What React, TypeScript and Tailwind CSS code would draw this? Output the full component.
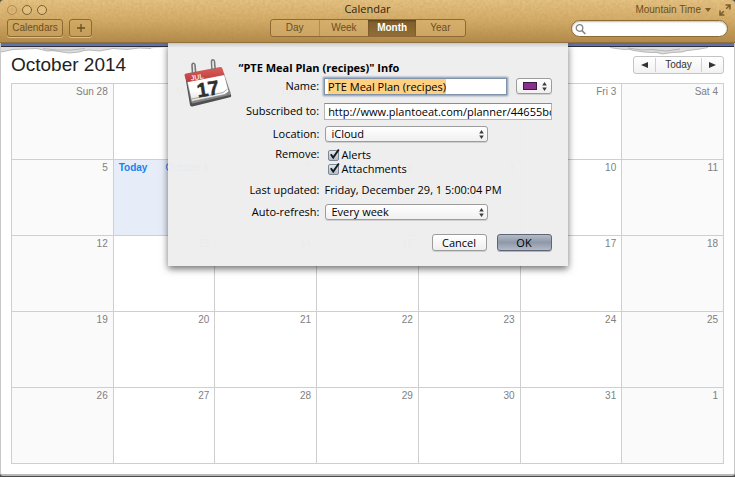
import { useEffect, useRef, type ReactNode } from "react";
import clsx from "clsx";

const weeks = [
  ["Sun 28", "Mon 29", "Tue 30", "Wed October 1", "Thu 2", "Fri 3", "Sat 4"],
  ["5", "October 6", "7", "8", "9", "10", "11"],
  ["12", "13", "14", "15", "16", "17", "18"],
  ["19", "20", "21", "22", "23", "24", "25"],
  ["26", "27", "28", "29", "30", "31", "1"],
];

const views = ["Day", "Week", "Month", "Year"];

const LeatherGrain = () => (
  <svg className="pointer-events-none absolute inset-0 h-full w-full opacity-25" aria-hidden="true">
    <filter id="grain">
      <feTurbulence type="fractalNoise" baseFrequency="0.35" numOctaves="3" seed="4" />
      <feColorMatrix values="0 0 0 0 0.4  0 0 0 0 0.25  0 0 0 0 0.05  1.6 0 0 0 -0.5" />
    </filter>
    <rect width="100%" height="100%" filter="url(#grain)" />
  </svg>
);

const Stepper = () => (
  <svg width="5" height="9" viewBox="0 0 5 9" fill="#3c3c3c" aria-hidden="true">
    <path d="M2.5 0 4.8 3.4H.2zM2.5 9 .2 5.6h4.6z" />
  </svg>
);

const CalendarIcon = () => (
  <svg width="56" height="56" viewBox="0 0 56 56" aria-hidden="true">
    <defs>
      <linearGradient id="red" x1="0" y1="0" x2="0" y2="1">
        <stop offset="0" stopColor="#d8605c" />
        <stop offset="1" stopColor="#bb3a3c" />
      </linearGradient>
      <linearGradient id="paper" x1="0" y1="0" x2="0" y2="1">
        <stop offset="0.6" stopColor="#ffffff" />
        <stop offset="1" stopColor="#dedede" />
      </linearGradient>
    </defs>
    <path d="M5 20 8 26 12 45 50 37.5 51.200 40.500q.3 1.400-1.200 1.800L12.500 51.500q-2 .4-2.500-1.500z" fill="#505050" />
    <path d="M6.500 25 44 18.500 50.500 37.500 50 40 12.500 48.500 11 47z" fill="#858585" />
    <path d="M7.500 26.500 44 19.500 48.500 36.500 45 39.500 12 46.500z" fill="url(#paper)" />
    <path d="M11.500 44 43 37.500q4-3 4.500-3.500M12 46.500 45 39.500l4-3" fill="none" stroke="#888" strokeWidth=".7" />
    <path d="M4.500 20.500q-.3-1.700 1.500-2L40 12q2-.3 2.400 1.500L44.500 20 7 27.200z" fill="url(#red)" />
    <text x="11" y="25.500" transform="rotate(-9 11 25.500)" fill="#f9e3e2" fontSize="7" fontWeight="700" fontFamily="Liberation Sans, sans-serif">
      JUL
    </text>
    <text x="18" y="42.500" transform="rotate(-9 18 42.500)" fill="#303030" stroke="#303030" strokeWidth=".5" fontSize="20" fontWeight="700" fontFamily="Liberation Sans, sans-serif">
      17
    </text>
    <g fill="none" strokeLinecap="round">
      <path d="M12.500 18 12 10.500q0-2.300 1.400-2.300T15 10l.6 7M32 14.500 31.500 7q0-2.300 1.400-2.300T34.500 6.500l.6 7" stroke="#777" strokeWidth="1.600" />
      <path d="M13.500 16v-6M33 12.500v-6" stroke="#e2e2e2" strokeWidth=".8" />
    </g>
  </svg>
);

const TornEdge = ({ className, flip }: { className: string; flip?: boolean }) => (
  <svg className={className} width="166" height="8" viewBox="0 0 166 8" aria-hidden="true">
    {flip ? (
      <>
        <path d="M42 0H140L132 2 124 3 114 5 104 5.500 94 7 84 5.500 76 5 66 3.500 56 2.500 48 1.500z" fill="#dcdcdc" />
        <path d="M42 .5 48 1.500 56 2.500 61 2.200 66 3.500 76 5 84 5.500 89 5.200 94 7 104 5.500 114 5 119 3.500 124 3 132 2 140 .5M60 1 74 3 84 2.500 98 4 112 2" fill="none" stroke="#ababab" strokeWidth=".8" />
      </>
    ) : (
      <>
        <path d="M0 0H166L150 1.500 138 1 126 2.500 112 1.500 98 4 88 3 78 5 68 6 58 4.500 46 4 36 1.500 24 2 12 2.500 0 5z" fill="#dcdcdc" />
        <path d="M0 5 12 2.500 24 2 36 1.500 46 4 52 3.500 58 4.500 68 6 78 5 83 3.500 88 3 98 4 112 1.500 126 2.500 138 1 150 1.500M42 1.500 56 3 70 3 84 1.500" fill="none" stroke="#ababab" strokeWidth=".8" />
      </>
    )}
  </svg>
);

const PopUp = ({ id, options }: { id: string; options: string[] }) => (
  <div className="relative w-[163px]">
    <select
      id={id}
      className="block h-4 w-full appearance-none rounded-[3px] border border-[#9c9c9c] bg-linear-to-b from-white to-[#f0f0f0] pl-1.5 leading-[14px] shadow-[0_1px_0_#d0d0d0]"
    >
      {options.map((option) => (
        <option key={option}>{option}</option>
      ))}
    </select>
    <span className="pointer-events-none absolute inset-y-0 right-1 flex items-center">
      <Stepper />
    </span>
  </div>
);

const CheckBox = ({ label }: { label: string }) => (
  <label className="flex h-3.5 items-center gap-[3px]">
    <span className="relative flex">
      <input
        type="checkbox"
        defaultChecked
        className="h-[11px] w-[11px] appearance-none rounded-[2px] border border-[#7f8793] bg-linear-to-b from-[#e4e8ee] to-[#b4bdcc]"
      />
      <svg className="pointer-events-none absolute -top-0.5 left-0" width="13" height="12" viewBox="0 0 13 12" aria-hidden="true">
        <path d="M2.800 6.200 5.200 9.500 10.800 1.500" fill="none" stroke="#15181d" strokeWidth="1.900" />
      </svg>
    </span>
    {label}
  </label>
);

const Row = ({ label, htmlFor, className, children }: { label: string; htmlFor?: string; className?: string; children: ReactNode }) => (
  <div className={clsx("flex gap-[5px]", className)}>
    {htmlFor ? (
      <label htmlFor={htmlFor} className="w-[136px] text-right">
        {label}
      </label>
    ) : (
      <span className="w-[136px] text-right">{label}</span>
    )}
    {children}
  </div>
);

const InfoSheet = () => {
  const nameRef = useRef<HTMLInputElement>(null);

  useEffect(() => {
    nameRef.current?.select();
  }, []);

  return (
    <form
      role="dialog"
      aria-labelledby="sheet-title"
      onSubmit={(e) => e.preventDefault()}
      className="absolute top-0 left-1/2 w-[400px] -translate-x-1/2 bg-[#ededed]/97 px-4 pb-[15px] font-['Open_Sans','Noto_Sans',sans-serif] text-[11px] leading-4 text-black shadow-[0_3px_7px_rgba(0,0,0,0.55)]"
    >
      <div className="absolute top-3 left-3">
        <CalendarIcon />
      </div>
      <h2 id="sheet-title" className="pt-[17px] pl-[55px] font-bold">
        “PTE Meal Plan (recipes)" Info
      </h2>

      <Row label="Name:" htmlFor="name" className="mt-0.5">
        <input
          id="name"
          ref={nameRef}
          defaultValue="PTE Meal Plan (recipes)"
          className="h-[17px] w-[183px] border border-[#7f93ab] bg-white px-[3px] leading-[15px] shadow-[0_0_2px_1px_#8296b0] outline-none selection:bg-[#ffd07f] selection:text-black"
        />
        <button
          type="button"
          aria-label="Calendar colour"
          className="ml-1 flex h-4 w-9 items-center justify-between rounded-[3px] border border-[#9c9c9c] bg-linear-to-b from-white to-[#f0f0f0] pr-1 pl-1.5 shadow-[0_1px_0_#d0d0d0]"
        >
          <span className="h-2 w-3.5 border border-[#3b1a3d] bg-[#8b2f8f]" />
          <Stepper />
        </button>
      </Row>

      <Row label="Subscribed to:" htmlFor="url" className="mt-2">
        <input
          id="url"
          defaultValue="http://www.plantoeat.com/planner/44655bcd"
          className="h-[17px] w-[228px] border border-[#b4b4b4] border-t-[#8c8c8c] bg-white pl-[3px] leading-[15px] outline-none"
        />
      </Row>

      <Row label="Location:" htmlFor="location" className="mt-1.5">
        <PopUp id="location" options={["iCloud", "On My Mac"]} />
      </Row>

      <Row label="Remove:" className="mt-1">
        <div className="flex flex-col pt-0.5 pl-[3px]">
          <CheckBox label="Alerts" />
          <CheckBox label="Attachments" />
        </div>
      </Row>

      <Row label="Last updated:" className="mt-1.5">
        <span>Friday, December 29, 1 5:00:04 PM</span>
      </Row>

      <Row label="Auto-refresh:" htmlFor="refresh" className="mt-1.5">
        <PopUp id="refresh" options={["Every week", "Every day", "Every hour", "No"]} />
      </Row>

      <div className="mt-3.5 flex justify-end gap-2.5">
        <button
          type="button"
          className="h-[17px] w-[55px] rounded-[3px] border border-[#9c9c9c] bg-linear-to-b from-white to-[#efefef] leading-[15px] shadow-[0_1px_0_#d0d0d0]"
        >
          Cancel
        </button>
        <button
          type="submit"
          className="h-[17px] w-[55px] rounded-[3px] border border-[#5e6675] bg-linear-to-b from-[#b4bac6] via-[#8f98a9] to-[#b3bbca] leading-[15px] shadow-[0_1px_0_#b5b5b5]"
        >
          OK
        </button>
      </div>
    </form>
  );
};

const TitleBar = () => (
  <header className="relative z-10 h-[43px] rounded-t-[4px] border-b border-[#8f713f] bg-linear-to-b from-[#e5c283] via-[#d3ab68] to-[#b38a4a] text-[10px] text-[#6b4f22] shadow-[0_2px_3px_rgba(0,0,0,0.15)]">
    <LeatherGrain />
    <div className="relative grid h-[19px] grid-cols-3 items-center px-1">
      <div className="flex gap-[5px] pl-[3px]">
        <span className="h-2.5 w-2.5 rounded-full border border-[#b08c52]" />
        <span className="h-2.5 w-2.5 rounded-full border border-[#805f2c] bg-[#e0bf83]" />
        <span className="h-2.5 w-2.5 rounded-full border border-[#805f2c] bg-[#e0bf83]" />
      </div>
      <h1 className="text-center font-['Open_Sans','Noto_Sans',sans-serif] text-[11px] text-[#33240c]">Calendar</h1>
      <div className="flex items-center justify-end">
        <button className="flex items-center gap-1">
          Mountain Time
          <svg width="6" height="4" viewBox="0 0 6 4" fill="#7a5c2b" aria-hidden="true">
            <path d="M0 0h6L3 4z" />
          </svg>
        </button>
        <button aria-label="Full screen" className="ml-2">
          <svg width="12" height="12" viewBox="0 0 12 12" fill="none" stroke="#7a5c2b" strokeWidth="1.500" aria-hidden="true">
            <path d="M6.500 1H11v4.500M11 1 7.200 4.800M5.500 11H1V6.500M1 11l3.800-3.800" />
          </svg>
        </button>
      </div>
    </div>
    <div className="relative grid grid-cols-[1fr_auto_1fr] items-center px-[7px]">
      <div className="flex gap-1.5">
        <button className="h-[18px] w-14 rounded-[3px] border border-[#8d6a34] bg-[#d0a964]/50 leading-4 shadow-[0_1px_0_#e0c084]">
          Calendars
        </button>
        <button
          aria-label="Add event"
          className="flex h-[18px] w-[23px] items-center justify-center rounded-[3px] border border-[#8d6a34] bg-[#d0a964]/50 shadow-[0_1px_0_#e0c084]"
        >
          <svg width="8" height="8" viewBox="0 0 8 8" stroke="#6b4f22" strokeWidth="1.300" aria-hidden="true">
            <path d="M4 0v8M0 4h8" />
          </svg>
        </button>
      </div>
      <div className="flex h-[18px] w-[196px] overflow-hidden rounded-[3px] border border-[#8d6a34] bg-[#d8b372]/60">
        {views.map((view) => (
          <button
            key={view}
            className={clsx(
              "flex-1 leading-4",
              view === "Month" && "bg-linear-to-b from-[#7d5d2b] to-[#916e37] font-bold text-white shadow-[inset_0_1px_2px_#5c431c]",
              view === "Day" && "border-r border-[#b08c52]"
            )}
          >
            {view}
          </button>
        ))}
      </div>
      <div className="relative w-[157px] justify-self-end">
        <input
          type="search"
          aria-label="Search"
          className="block h-[17px] w-full rounded-full border border-[#8d6a34] bg-white pr-2 pl-5 text-black shadow-[inset_0_1px_2px_#bbb] outline-none"
        />
        <svg className="pointer-events-none absolute top-1 left-1" width="11" height="11" viewBox="0 0 11 11" fill="none" stroke="#858585" aria-hidden="true">
          <circle cx="4.500" cy="4" r="3.300" strokeWidth="1.300" />
          <path d="M6.900 6.500 10.300 10" strokeWidth="1.700" />
        </svg>
      </div>
    </div>
  </header>
);

const App = () => {
  return (
    <div className="flex min-h-screen flex-col bg-[#4a4a4a] font-['Liberation_Sans',Arial,sans-serif]">
      <TitleBar />
      <main className="relative flex-1 rounded-b-[3px] border-x border-b-2 border-x-[#c9c9c9] border-b-[#b9b9b9] bg-white px-2.5 pb-2.5">
        <div className="-mx-2.5 h-1 border-b border-[#2c2f3c] bg-[#6a7cb8]" />
        <TornEdge className="absolute top-1 left-0" />
        <TornEdge className="absolute top-1 right-0" flip />

        <div className="flex h-9 items-center justify-between">
          <h2 className="text-[19px] leading-6 text-[#222]">October 2014</h2>
          <div className="flex h-[18px] w-[91px] items-center rounded-[3px] border border-[#c4c4c4] bg-linear-to-b from-white to-[#f2f2f2] text-[#333]">
            <button aria-label="Previous month" className="flex w-[21px] justify-center">
              <svg width="7" height="6" viewBox="0 0 7 6" fill="#333" aria-hidden="true">
                <path d="M7 0v6L0 3z" />
              </svg>
            </button>
            <button className="h-3.5 flex-1 border-x border-[#d0d0d0] text-[10px] leading-3.5">Today</button>
            <button aria-label="Next month" className="flex w-[21px] justify-center">
              <svg width="7" height="6" viewBox="0 0 7 6" fill="#333" aria-hidden="true">
                <path d="M0 0v6l7-3z" />
              </svg>
            </button>
          </div>
        </div>

        <table className="w-full table-fixed border-collapse text-[10px] leading-3 text-[#808080]">
          <tbody>
            {weeks.map((week, row) => (
              <tr key={row} className="h-[76px]">
                {week.map((day, col) => (
                  <td
                    key={col}
                    className={clsx(
                      "border border-[#cfcfcf] px-[5px] pt-0.5 text-right align-top",
                      (col === 0 || col === 6) && "bg-[#fafafa]",
                      day === "October 6" && "bg-[#e6edf8] text-[#1583f0]"
                    )}
                  >
                    {day === "October 6" ? (
                      <div className="flex justify-between">
                        <span className="font-bold">Today</span>
                        <span>{day}</span>
                      </div>
                    ) : (
                      day
                    )}
                  </td>
                ))}
              </tr>
            ))}
          </tbody>
        </table>

        <InfoSheet />
      </main>
      <div className="h-0.5" />
    </div>
  );
};

export default App;
